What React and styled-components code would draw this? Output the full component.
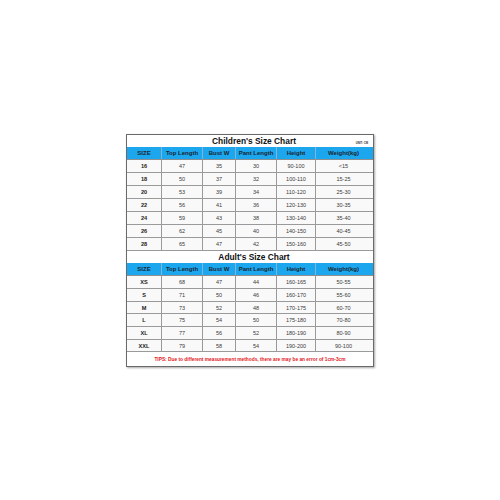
import styled, { createGlobalStyle } from 'styled-components';

const GlobalStyle = createGlobalStyle`
    html, body {
        margin: 0;
        padding: 0;
        background: #ffffff;
        font-family: "Liberation Sans", Arial, sans-serif;
    }
`;

const childRows = [
    ['16', '47', '35', '30', '90-100', '<15'],
    ['18', '50', '37', '32', '100-110', '15-25'],
    ['20', '53', '39', '34', '110-120', '25-30'],
    ['22', '56', '41', '36', '120-130', '30-35'],
    ['24', '59', '43', '38', '130-140', '35-40'],
    ['26', '62', '45', '40', '140-150', '40-45'],
    ['28', '65', '47', '42', '150-160', '45-50'],
];

const adultRows = [
    ['XS', '68', '47', '44', '160-165', '50-55'],
    ['S', '71', '50', '46', '160-170', '55-60'],
    ['M', '73', '52', '48', '170-175', '60-70'],
    ['L', '75', '54', '50', '175-180', '70-80'],
    ['XL', '77', '56', '52', '180-190', '80-90'],
    ['XXL', '79', '58', '54', '190-200', '90-100'],
];

const adultHeights = [13, 13, 12, 13, 13, 12];

const headers = ['SIZE', 'Top Length', 'Bust W', 'Pant Length', 'Height', 'Weight(kg)'];

export default function App() {
    return (
        <>
            <GlobalStyle />
            <Page>
                <Chart>
                    <TitleRow>
                        <span />
                        <Title>Children's Size Chart</Title>
                        <Unit>UNIT: CM</Unit>
                    </TitleRow>
                    <HeadRow>
                        {headers.map((h) => (
                            <HeadCell key={h}>{h}</HeadCell>
                        ))}
                    </HeadRow>
                    {childRows.map((row) => (
                        <Row key={row[0]} h={13}>
                            {row.map((v, i) => (
                                <Cell key={i} bold={i === 0}>
                                    {v}
                                </Cell>
                            ))}
                        </Row>
                    ))}
                    <TitleRow>
                        <span />
                        <Title>Adult's Size Chart</Title>
                        <span />
                    </TitleRow>
                    <HeadRow>
                        {headers.map((h) => (
                            <HeadCell key={h}>{h}</HeadCell>
                        ))}
                    </HeadRow>
                    {adultRows.map((row, r) => (
                        <Row key={row[0]} h={adultHeights[r]}>
                            {row.map((v, i) => (
                                <Cell key={i} bold={i === 0}>
                                    {v}
                                </Cell>
                            ))}
                        </Row>
                    ))}
                    <Tips>
                        TIPS: Due to different measurement methods, there are may be an error of 1cm-3cm
                    </Tips>
                </Chart>
            </Page>
        </>
    );
}

const Page = styled.div`
    width: 500px;
    height: 500px;
    display: flex;
    justify-content: center;
    align-items: flex-start;
    padding-top: 134px;
    box-sizing: border-box;
`;

const Chart = styled.div`
    width: 246px;
    border: 1px solid #6a6a6a;
    box-shadow: 1px 1px 2px rgba(0, 0, 0, 0.35);
    background: #ffffff;
    display: flex;
    flex-direction: column;
`;

const TitleRow = styled.div`
    height: 12px;
    display: grid;
    grid-template-columns: 1fr auto 1fr;
    align-items: center;
    background: #ffffff;
`;

const Title = styled.div`
    font-size: 8.4px;
    font-weight: bold;
    color: #111;
    padding-left: 8px;
    line-height: 12px;
    white-space: nowrap;
`;

const Unit = styled.div`
    justify-self: end;
    align-self: end;
    margin-right: 5px;
    margin-bottom: 2px;
    font-size: 2.8px;
    font-weight: bold;
    color: #333;
    white-space: nowrap;
`;

const cols = '35px 41px 33px 41px 39px 55px';

const HeadRow = styled.div`
    display: grid;
    grid-template-columns: ${cols};
    height: 13px;
    box-sizing: border-box;
    background: #1ba6ee;
    border-bottom: 1px solid #8f8f8f;
`;

const HeadCell = styled.div`
    display: flex;
    align-items: center;
    justify-content: center;
    font-size: 6px;
    font-weight: bold;
    color: #1c2530;
    border-right: 1px solid #7fb5d6;
    white-space: nowrap;
    &:last-child {
        border-right: none;
    }
`;

const Row = styled.div`
    display: grid;
    grid-template-columns: ${cols};
    height: ${(p) => p.h}px;
    box-sizing: border-box;
    background: #f9f9f9;
    border-bottom: 1px solid #9a9a9a;
`;

const Cell = styled.div`
    display: flex;
    align-items: center;
    justify-content: center;
    font-size: ${(p) => (p.bold ? '5.6px' : '5.5px')};
    font-weight: ${(p) => (p.bold ? 'bold' : 'normal')};
    color: ${(p) => (p.bold ? '#222' : '#3a3a3a')};
    border-right: 1px solid #9a9a9a;
    white-space: nowrap;
    &:last-child {
        border-right: none;
    }
`;

const Tips = styled.div`
    height: 14px;
    display: flex;
    align-items: center;
    justify-content: center;
    font-size: 4.8px;
    font-weight: bold;
    color: #e3161b;
    white-space: nowrap;
    background: #ffffff;
`;
